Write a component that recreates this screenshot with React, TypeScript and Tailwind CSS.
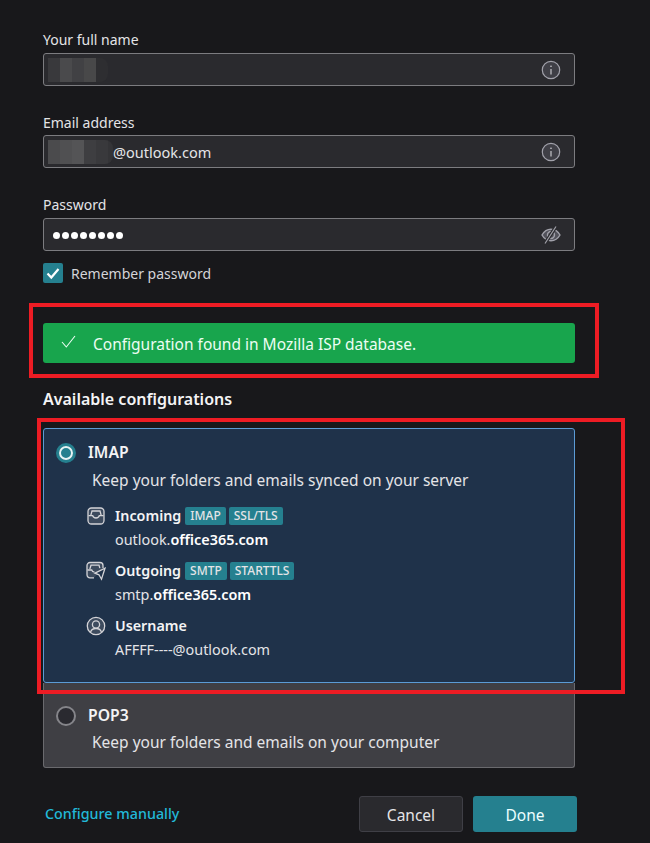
const font = "font-['Noto_Sans','Open_Sans',sans-serif]";

function InfoIcon() {
  return (
    <svg width="20" height="20" viewBox="0 0 20 20" fill="none">
      <circle cx="10" cy="10" r="8.7" fill="#3f3f46" stroke="#a1a1aa" strokeWidth="1.2" />
      <path d="M10 9v5.500" stroke="#d4d4d8" strokeWidth="1.1" />
      <circle cx="10" cy="6.300" r="0.8" fill="#d4d4d8" />
    </svg>
  );
}

function EyeOffIcon() {
  return (
    <svg width="20" height="18" viewBox="0 0 20 18" fill="#52525b" stroke="#a1a1aa" strokeWidth="1.4">
      <path d="M1 9c2-3.500 5-5.700 9-5.700s7 2.200 9 5.700c-2 3.500-5 5.700-9 5.700S3 12.500 1 9z" />
      <path d="M10 5.500a3.500 3.500 0 1 0 0 7 3.500 3.500 0 1 0 0-7z" />
      <path d="M15 .5 4 17.500" stroke="#2a2a2e" strokeWidth="3.400" />
      <path d="M15 .5 4 17.500" strokeWidth="1.200" />
    </svg>
  );
}

function InboxIcon() {
  return (
    <svg width="18" height="18" viewBox="0 0 18 18" fill="none" stroke="#d4d4d8" strokeWidth="1.300">
      <rect x="1" y="1" width="16" height="16" rx="3.500" fill="#3d4b5e" />
      <path d="M3.800 8.300 5 4h8l1.200 4.300" />
      <path d="M1.500 8.700h4.200c.3 1.500 1.500 2.300 3.300 2.300s3-.8 3.300-2.300h4.200" />
    </svg>
  );
}

function OutboxIcon() {
  return (
    <svg width="20" height="20" viewBox="0 0 20 20" fill="none" stroke="#d4d4d8" strokeWidth="1.300">
      <path d="M8 16.800H4a3 3 0 0 1-3-3V4.500a3 3 0 0 1 3-3h10a3 3 0 0 1 3 3V7" fill="#3d4b5e" />
      <path d="M3.800 8 5 4.200h8l.8 3" />
      <path d="M1.500 9h4.200c.4 1.300 1.300 2 2.800 2.200" />
      <path d="m9 12.200 10-5-3.500 11-2.500-4.400z" fill="#1f324a" />
    </svg>
  );
}

function UserIcon() {
  return (
    <svg width="20" height="20" viewBox="0 0 20 20" fill="none" stroke="#d4d4d8" strokeWidth="1.300">
      <circle cx="10" cy="10" r="8.700" fill="#3d4b5e" />
      <circle cx="10" cy="8.500" r="3.600" />
      <path d="M4.500 16.300c.6-2.300 2.500-3.800 5.500-3.800s4.900 1.500 5.500 3.800" />
    </svg>
  );
}

function Redaction({ cells, width }: { cells: string[]; width: string }) {
  return (
    <div className={`flex h-[24px] rounded-r-[8px] overflow-hidden ${width}`}>
      {cells.map((c, i) => (
        <div key={i} className="w-[12px] h-full shrink-0" style={{ backgroundColor: c }} />
      ))}
    </div>
  );
}

function Field({ label, gap, labelGap, icon, children }: { label: string; gap: string; labelGap: string; icon: React.ReactNode; children: React.ReactNode }) {
  return (
    <div className={gap}>
      <div className={`text-[14px] leading-[20px] text-[#e4e4e7] ${labelGap}`}>{label}</div>
      <div className="h-[33px] w-[532px] flex items-center justify-between rounded-[3px] border border-[#7c7c80] bg-[#2a2a2e] pl-[4px] pr-[13px]">
        <div className="flex items-center text-[14.500px] text-[#e4e4e7]">{children}</div>
        {icon}
      </div>
    </div>
  );
}

function Badge({ children }: { children: React.ReactNode }) {
  return (
    <span className="h-[18px] px-[5px] rounded-[2px] bg-[#25808f] text-[12px] leading-[18px] font-medium text-[#e4e4e7]">
      {children}
    </span>
  );
}

function Server({ icon, title, badges, children }: { icon: React.ReactNode; title: string; badges?: string[]; children: React.ReactNode }) {
  return (
    <div className="flex gap-[9px]">
      <div className="w-[20px] h-[20px] flex items-center justify-center shrink-0">{icon}</div>
      <div>
        <div className="flex items-center gap-[3px] h-[20px] text-[14.300px] font-semibold text-[#f4f4f5]">
          <span className="mr-[1px]">{title}</span>
          {badges?.map((b) => <Badge key={b}>{b}</Badge>)}
        </div>
        <div className="mt-[4px] text-[14.400px] leading-[20px] text-[#e4e4e7]">{children}</div>
      </div>
    </div>
  );
}

export default function App() {
  return (
    <div className={`${font} relative w-[650px] h-[843px] overflow-hidden bg-[#18181b] pl-[43px] pt-[30px]`}>
      <Field label="Your full name" gap="mb-[27px]" labelGap="mb-[3px]" icon={<InfoIcon />}>
        <Redaction width="w-[60px]" cells={["#39393c", "#4a4a4c", "#414144", "#484849", "#2e2e31"]} />
      </Field>
      <Field label="Email address" gap="mb-[27px]" labelGap="mb-[2px]" icon={<InfoIcon />}>
        <Redaction width="w-[65px]" cells={["#4b4b4d", "#505052", "#545456", "#3e3e41", "#39393c", "#343437"]} />
        <span className="translate-y-[0.500px]">@outlook.com</span>
      </Field>
      <Field label="Password" gap="mb-[12px]" labelGap="mb-[3px]" icon={<EyeOffIcon />}>
        <span className="ml-[5px] mt-[1px] flex gap-[2px]">
          {[0, 1, 2, 3, 4, 5, 6, 7].map((i) => (
            <span key={i} className="w-[7px] h-[7px] rounded-full bg-white" />
          ))}
        </span>
      </Field>

      <div className="flex items-center gap-[8px] h-[20px] text-[14px] text-[#d4d4d8]">
        <div className="w-[20px] h-[20px] rounded-[2px] bg-[#25808f] flex items-center justify-center">
          <svg width="14" height="14" viewBox="0 0 14 14" fill="none" stroke="#fff" strokeWidth="2.200">
            <path d="M1.500 7.500 5.300 11.500 12.500 3" />
          </svg>
        </div>
        Remember password
      </div>

      <div className="mt-[40px] w-[532px] h-[40px] rounded-[3px] bg-[#18a54d] flex items-center pl-[18px] gap-[17px] text-[15.500px] leading-[24px] text-[#ecfdf3]">
        <svg width="15" height="13" viewBox="0 0 15 13" fill="none" stroke="#ecfdf3" strokeWidth="1.100" className="-mt-[3px]">
          <path d="M1 7 5.300 12 14 1" />
        </svg>
        <span className="pt-[2px]">Configuration found in Mozilla ISP database.</span>
      </div>

      <div className="mt-[25px] text-[16px] leading-[22px] font-semibold text-[#f4f4f5]">Available configurations</div>

      <div className="mt-[18px] w-[532px] h-[255px] rounded-[3px] border border-[#5b9bd5] bg-[#1f324a] pl-[12px] pt-[13px]">
        <div className="flex items-center gap-[12px] h-[22px]">
          <div className="w-[20px] h-[20px] rounded-full bg-[#164e63] border-[3px] border-[#25808f] flex items-center justify-center">
            <div className="w-[14px] h-[14px] rounded-full border-[2px] border-[#e6f4f5] bg-[#25808f]" />
          </div>
          <span className="text-[15.700px] font-semibold text-[#f4f4f5]">IMAP</span>
        </div>
        <div className="mt-[5px] ml-[36px] text-[15.500px] leading-[22px] text-[#e4e4e7]">Keep your folders and emails synced on your server</div>
        <div className="mt-[15px] ml-[30px] flex flex-col gap-[11px]">
          <Server icon={<InboxIcon />} title="Incoming" badges={["IMAP", "SSL/TLS"]}>
            outlook.<b className="font-semibold text-white">office365.com</b>
          </Server>
          <Server icon={<OutboxIcon />} title="Outgoing" badges={["SMTP", "STARTTLS"]}>
            smtp.<b className="font-semibold text-white">office365.com</b>
          </Server>
          <Server icon={<UserIcon />} title="Username">
            AFFFF----@outlook.com
          </Server>
        </div>
      </div>

      <div className="w-[532px] h-[85px] rounded-b-[3px] border border-t-0 border-[#6a6a6e] bg-[#3f3f44] pl-[12px] pt-[22px]">
        <div className="flex items-center gap-[12px] h-[22px]">
          <div className="w-[20px] h-[20px] rounded-full bg-[#2a2a30] border-[2px] border-[#85858a]" />
          <span className="text-[15.700px] font-semibold text-[#f4f4f5]">POP3</span>
        </div>
        <div className="mt-[4px] ml-[36px] text-[15.500px] leading-[22px] text-[#e4e4e7]">Keep your folders and emails on your computer</div>
      </div>

      <div className="mt-[28px] w-[534px] flex items-center justify-between">
        <span className="ml-[2px] text-[14.300px] font-medium text-[#22b8d8]">Configure manually</span>
        <div className="flex gap-[10px]">
          <div className="w-[104px] h-[36px] pt-[3px] rounded-[3px] border border-[#3f3f46] bg-[#2a2a2e] flex items-center justify-center text-[15.500px] text-[#e4e4e7]">Cancel</div>
          <div className="w-[104px] h-[36px] pt-[3px] rounded-[3px] bg-[#25808f] flex items-center justify-center text-[15.500px] text-[#ecfeff]">Done</div>
        </div>
      </div>

      <div className="absolute left-[29px] top-[303px] w-[570px] h-[75px] border-[4px] border-[#ed1c24]" />
      <div className="absolute left-[37px] top-[418px] w-[588px] h-[276px] border-[4px] border-[#ed1c24]" />
    </div>
  );
}
